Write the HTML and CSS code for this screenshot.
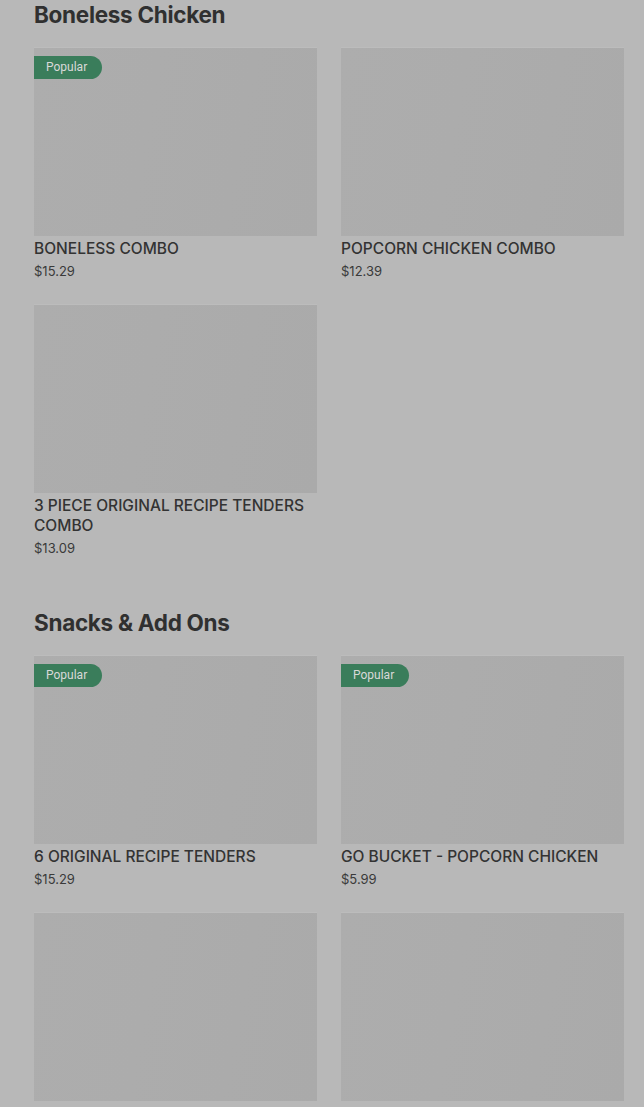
FILE: index.html
```html
<!DOCTYPE html>
<html lang="en">
<head>
<meta charset="utf-8">
<title>Menu</title>
<link rel="stylesheet" href="styles.css">
</head>
<body>
<main class="menu">
  <section class="section">
    <h2 class="section-title">Boneless Chicken</h2>
    <div class="grid">
      <article class="card">
        <div class="card-image"><span class="badge">Popular</span></div>
        <h3 class="card-title">BONELESS COMBO</h3>
        <p class="card-price">$15.29</p>
      </article>
      <article class="card">
        <div class="card-image"></div>
        <h3 class="card-title">POPCORN CHICKEN COMBO</h3>
        <p class="card-price">$12.39</p>
      </article>
      <article class="card">
        <div class="card-image"></div>
        <h3 class="card-title">3 PIECE ORIGINAL RECIPE TENDERS COMBO</h3>
        <p class="card-price">$13.09</p>
      </article>
    </div>
  </section>
  <section class="section">
    <h2 class="section-title">Snacks &amp; Add Ons</h2>
    <div class="grid">
      <article class="card">
        <div class="card-image"><span class="badge">Popular</span></div>
        <h3 class="card-title">6 ORIGINAL RECIPE TENDERS</h3>
        <p class="card-price">$15.29</p>
      </article>
      <article class="card">
        <div class="card-image"><span class="badge">Popular</span></div>
        <h3 class="card-title">GO BUCKET - POPCORN CHICKEN</h3>
        <p class="card-price">$5.99</p>
      </article>
      <article class="card">
        <div class="card-image"></div>
        <h3 class="card-title">&nbsp;</h3>
        <p class="card-price">&nbsp;</p>
      </article>
      <article class="card">
        <div class="card-image"></div>
        <h3 class="card-title">&nbsp;</h3>
        <p class="card-price">&nbsp;</p>
      </article>
    </div>
  </section>
</main>
</body>
</html>
```
FILE: styles.css
```css
html, body {
  margin: 0;
  padding: 0;
  background: #b8b8b8;
}
body {
  font-family: Inter, "Noto Sans", "Liberation Sans", sans-serif;
  color: #2f2f2f;
  overflow: hidden;
  height: 1107px;
}
.menu {
  padding: 0 20px 0 34px;
}
.section + .section {
  margin-top: 50px;
}
.section-title {
  margin: 0 0 18px;
  font-size: 22.5px;
  line-height: 30px;
  font-weight: 700;
  letter-spacing: -0.3px;
  color: #303030;
}
.grid {
  display: grid;
  grid-template-columns: 283px 283px;
  column-gap: 24px;
  row-gap: 24px;
}
.card {
  display: flex;
  flex-direction: column;
}
.card-image {
  position: relative;
  height: 188px;
  background: linear-gradient(100deg, #adadad 0%, #acacac 40%, #aaaaaa 100%);
  box-shadow: 0 -1px 0 #bcbcbc;
}
.badge {
  position: absolute;
  left: 0;
  top: 8px;
  height: 23px;
  line-height: 23px;
  padding: 0 15px 0 12px;
  background: #3a7d5b;
  color: #d9d9d9;
  font-size: 12px;
  font-family: Roboto, "Liberation Sans", sans-serif;
  border-radius: 0 12px 12px 0;
}
.card-title {
  margin: 3px 0 0;
  font-size: 15.5px;
  line-height: 20px;
  font-weight: 500;
  color: #333333;
}
.card-price {
  margin: 2px 0 0;
  font-size: 13px;
  line-height: 20px;
  color: #3a3a3a;
}
```
